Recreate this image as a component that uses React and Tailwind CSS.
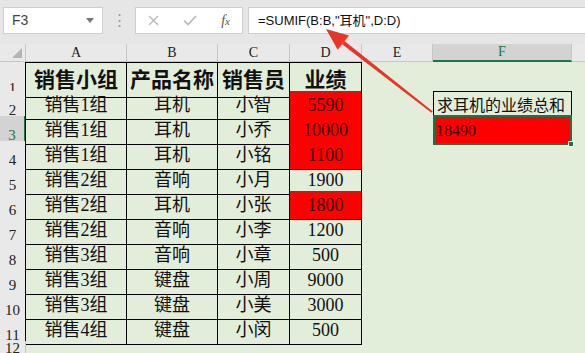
import React from "react";

const rows = [
  ["销售1组", "耳机", "小智", "5590", true],
  ["销售1组", "耳机", "小乔", "10000", true],
  ["销售1组", "耳机", "小铭", "1100", true],
  ["销售2组", "音响", "小月", "1900", false],
  ["销售2组", "耳机", "小张", "1800", true],
  ["销售2组", "音响", "小李", "1200", false],
  ["销售3组", "音响", "小章", "500", false],
  ["销售3组", "键盘", "小周", "9000", false],
  ["销售3组", "键盘", "小美", "3000", false],
  ["销售4组", "键盘", "小闵", "500", false],
];

const cols = "grid grid-cols-[26px_101px_91px_72px_72px_71px_139px_1fr]";
const cellFont = { fontFamily: '"Liberation Serif", "Noto Sans CJK SC", serif' };

function RowHead({ n, active }) {
  return (
    <div
      className={`flex items-end justify-center border-b border-[#d6d6d6] pb-[1px] text-[15px] leading-none ${
        active
          ? "bg-[#d3d3d3] border-r-2 border-r-[#217346] text-[#217346]"
          : "bg-[#e9e9e9] border-r border-r-[#c6c6c6] text-[#222]"
      }`}
      style={cellFont}
    >
      {n}
    </div>
  );
}

function Toolbar() {
  return (
    <div className="flex h-[44px] items-start bg-[#e6e6e6] pt-[7px] text-[13px] text-[#333]" style={{ fontFamily: '"Liberation Sans", "Noto Sans CJK SC", sans-serif' }}>
      <div className="ml-[3px] flex h-[27px] w-[100px] items-center justify-between border border-[#cfcfcf] bg-white pl-[8px] pr-[8px] text-[14px] text-[#444]">
        <span>F3</span>
        <span className="h-0 w-0 border-x-[4px] border-t-[5px] border-x-transparent border-t-[#777]" />
      </div>
      <div className="flex h-[27px] w-[32px] items-center justify-center text-[#999] text-[15px]">⋮</div>
      <div className="flex h-[27px] w-[108px] items-center justify-between border border-[#cfcfcf] bg-white px-[12px]">
        <svg width="11" height="11" viewBox="0 0 11 11" stroke="#b8b8b8" strokeWidth="1.4">
          <path d="M1 1L10 10M10 1L1 10" />
        </svg>
        <svg width="14" height="11" viewBox="0 0 14 11" fill="none" stroke="#b8b8b8" strokeWidth="1.6">
          <path d="M1 5.5L5 9.5L13 1" />
        </svg>
        <span className="italic text-[#555] text-[14px]" style={{ fontFamily: '"Liberation Serif", serif' }}>
          f<span className="text-[11px]">x</span>
        </span>
      </div>
      <div className="ml-[5px] flex h-[27px] flex-1 items-center border border-r-0 border-[#cfcfcf] bg-white pl-[9px] text-[#111]">
        =SUMIF(B:B,"耳机",D:D)
      </div>
    </div>
  );
}

function ColumnHeads() {
  const letters = ["A", "B", "C", "D", "E"];
  return (
    <div className={`${cols} h-[18px] bg-[#e9e9e9] text-[14px] text-[#222]`} style={cellFont}>
      <div className="flex items-end justify-end border-r border-b border-[#c6c6c6] pb-[3px] pr-[3px]">
        {/* select-all corner */}
        <svg width="10" height="10" viewBox="0 0 10 10">
          <polygon points="10,0 10,10 0,10" fill="#b4b4b4" />
        </svg>
      </div>
      {letters.map((l) => (
        <div key={l} className="flex items-center justify-center border-r border-b border-[#c6c6c6] leading-none">
          {l}
        </div>
      ))}
      <div className="flex items-center justify-center border-b-2 border-b-[#217346] border-r border-r-[#c6c6c6] bg-[#d3d3d3] leading-none text-[#217346]">
        F
      </div>
      <div className="border-b border-[#c6c6c6]" />
    </div>
  );
}

function TableCell({ children, first, top, bold, red, className = "" }) {
  return (
    <div
      className={`flex items-center justify-center border-r border-b border-black ${first ? "border-l" : ""} ${
        top ? "border-t" : ""
      } ${red ? "bg-[#ff0000] text-[#3a0000]" : "text-[#111]"} ${
        bold ? "font-bold text-[21px]" : "text-[18px]"
      } ${className}`}
    >
      {children}
    </div>
  );
}

export default function App() {
  return (
    <div className="relative h-[353px] w-[585px] overflow-hidden bg-[#e2edda]">
      <Toolbar />
      <ColumnHeads />

      {/* header row */}
      <div className={`${cols} h-[29px]`} style={cellFont}>
        <RowHead n={1} />
        <TableCell first top bold className="-ml-px pt-[2px]">销售小组</TableCell>
        <TableCell top bold className="pt-[2px]">产品名称</TableCell>
        <TableCell top bold className="pt-[2px]">销售员</TableCell>
        <TableCell top bold className="pt-[2px]">业绩</TableCell>
        <div />
        <div />
        <div />
      </div>

      {rows.map(([group, product, person, value, red], i) => {
        const n = i + 2;
        return (
          <div key={n} className={`${cols} h-[25px]`} style={cellFont}>
            <RowHead n={n} active={n === 3} />
            <TableCell first className="-ml-px pt-[1px]">{group}</TableCell>
            <TableCell className="pt-[1px]">{product}</TableCell>
            <TableCell className="pt-[1px]">{person}</TableCell>
            <TableCell red={red} className="pt-[1px]">{value}</TableCell>
            <div />
            {n === 2 && (
              <div className="flex items-center border border-black pl-[3px] text-[16px] text-[#111]">求耳机的业绩总和</div>
            )}
            {n === 3 && (
              <div className="relative -mt-px flex items-center border-2 border-[#217346] bg-[#ff0000] pl-[1px] pt-[2px] text-[16px] text-[#3a0000]">
                18490
                <span className="absolute -bottom-[4px] -right-[4px] h-[6px] w-[6px] border border-white bg-[#217346]" />
              </div>
            )}
            {n !== 2 && n !== 3 && <div />}
            <div />
          </div>
        );
      })}

      {/* row 12, only its top shows */}
      <div className={`${cols} h-[17px]`} style={cellFont}>
        <RowHead n={12} />
      </div>

      {/* pointer arrow */}
      <svg className="pointer-events-none absolute left-0 top-0" width="585" height="353">
        <polygon points="344.5,41 342.1,44.2 431.4,112.8 432.6,111.2" fill="#e8352c" />
        <polygon points="326,29 349,35.5 337.7,49.7" fill="#e8352c" />
      </svg>
    </div>
  );
}
